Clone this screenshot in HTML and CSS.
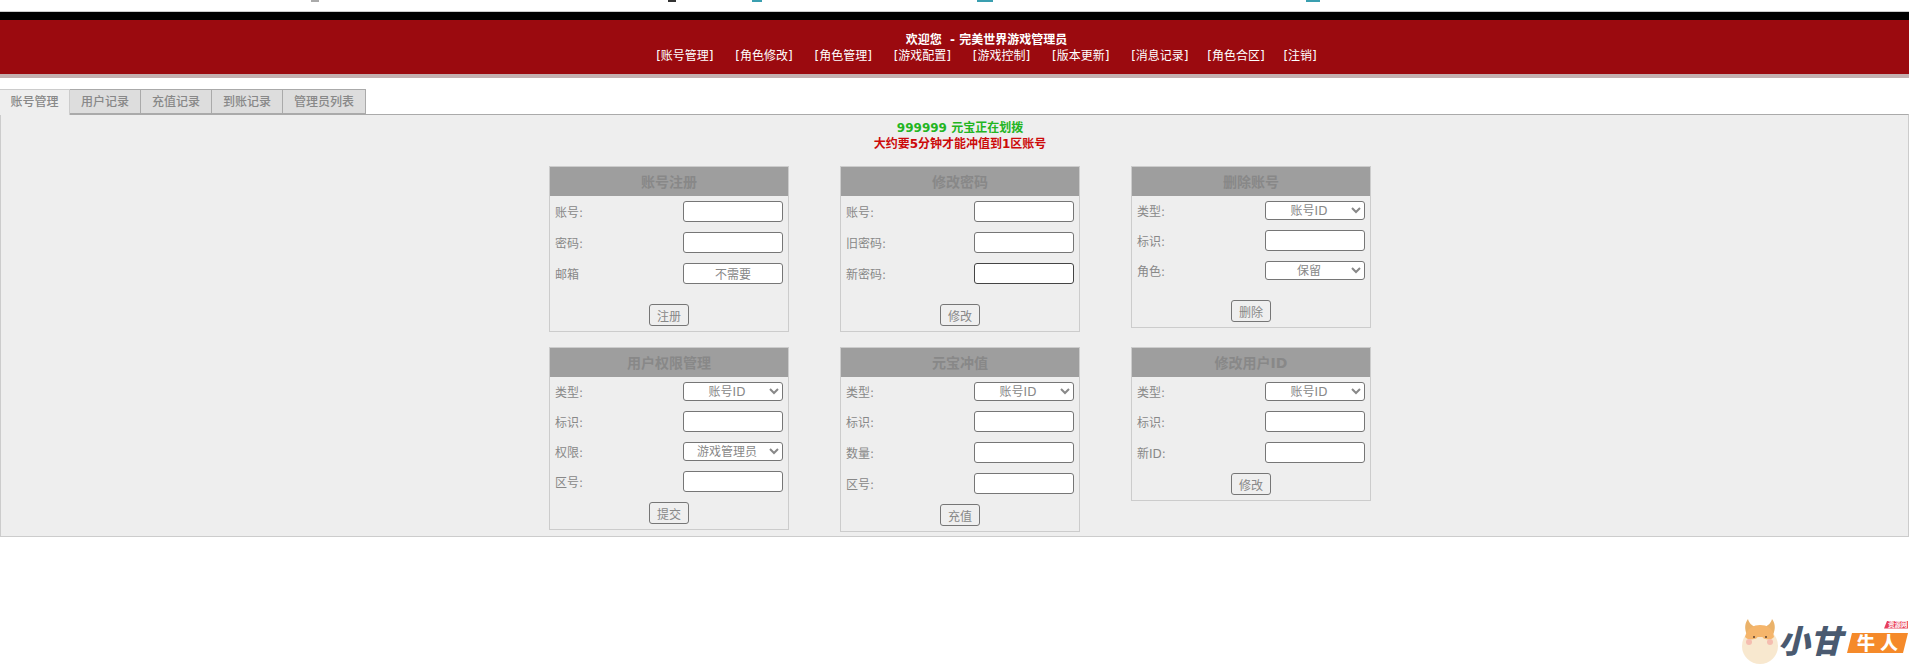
FILE: index.html
```html
<!DOCTYPE html>
<html lang="zh-CN">
<head>
<meta charset="utf-8">
<title>完美世界游戏管理员</title>
<link rel="stylesheet" href="styles.css">
</head>
<body>
<div class="topstrip">
  <i class="frag frag-a"></i><i class="frag frag-b"></i><i class="frag frag-c"></i><i class="frag frag-d"></i><i class="frag frag-e"></i>
</div>
<header class="masthead">
  <div class="welcome">欢迎您&nbsp; - 完美世界游戏管理员</div>
  <nav class="mainnav">
    <a>[账号管理]</a><a>[角色修改]</a><a>[角色管理]</a><a>[游戏配置]</a><a>[游戏控制]</a><a>[版本更新]</a><a>[消息记录]</a><a class="tight">[角色合区]</a><a class="tight">[注销]</a>
  </nav>
</header>
<div class="tabs">
  <a class="tab active">账号管理</a><a class="tab">用户记录</a><a class="tab">充值记录</a><a class="tab">到账记录</a><a class="tab">管理员列表</a>
</div>
<main class="content">
  <div class="msg green">999999 元宝正在划拨</div>
  <div class="msg red">大约要5分钟才能冲值到1区账号</div>
  <div class="panels">
    <section class="panel">
      <h3>账号注册</h3>
      <div class="body">
        <label class="row"><span>账号:</span><input type="text"></label>
        <label class="row"><span>密码:</span><input type="text"></label>
        <label class="row"><span>邮箱</span><input type="text" value="不需要"></label>
        <button class="far">注册</button>
      </div>
    </section>
    <section class="panel">
      <h3>修改密码</h3>
      <div class="body">
        <label class="row"><span>账号:</span><input type="text"></label>
        <label class="row"><span>旧密码:</span><input type="text"></label>
        <label class="row"><span>新密码:</span><input class="dark" type="text"></label>
        <button class="far">修改</button>
      </div>
    </section>
    <section class="panel">
      <h3>删除账号</h3>
      <div class="body">
        <label class="row"><span>类型:</span><select><option>账号ID</option></select></label>
        <label class="row"><span>标识:</span><input type="text"></label>
        <label class="row"><span>角色:</span><select><option>保留</option></select></label>
        <button class="far">删除</button>
      </div>
    </section>
    <section class="panel">
      <h3>用户权限管理</h3>
      <div class="body">
        <label class="row"><span>类型:</span><select><option>账号ID</option></select></label>
        <label class="row"><span>标识:</span><input type="text"></label>
        <label class="row"><span>权限:</span><select><option>游戏管理员</option></select></label>
        <label class="row"><span>区号:</span><input type="text"></label>
        <button>提交</button>
      </div>
    </section>
    <section class="panel">
      <h3>元宝冲值</h3>
      <div class="body">
        <label class="row"><span>类型:</span><select><option>账号ID</option></select></label>
        <label class="row"><span>标识:</span><input type="text"></label>
        <label class="row"><span>数量:</span><input type="text"></label>
        <label class="row"><span>区号:</span><input type="text"></label>
        <button>充值</button>
      </div>
    </section>
    <section class="panel">
      <h3>修改用户ID</h3>
      <div class="body">
        <label class="row"><span>类型:</span><select><option>账号ID</option></select></label>
        <label class="row"><span>标识:</span><input type="text"></label>
        <label class="row"><span>新ID:</span><input type="text"></label>
        <button>修改</button>
      </div>
    </section>
  </div>
</main>
<svg class="watermark" width="167" height="49" viewBox="0 -3 167 49" aria-label="小甘牛人">
  <path d="M6 17 C3 10 4 5 7 1 C8 5 11 8 15 9 L11 17Z" fill="#eab26a"/>
  <path d="M32 17 C35 10 34 5 31 1 C30 5 27 8 23 9 L27 17Z" fill="#eab26a"/>
  <circle cx="19" cy="28" r="18" fill="#f8e8cf"/>
  <path d="M4 19 C6 10 13 7 19 7 C26 7 32 10 33 19 C28 24 24 20 19 20 C14 20 9 24 4 19Z" fill="#f5b56b"/>
  <circle cx="8" cy="24" r="3" fill="#f5bdb0"/>
  <circle cx="29" cy="24" r="3" fill="#f5bdb0"/>
  <circle cx="13" cy="19" r="1" fill="#5a4030"/>
  <circle cx="25" cy="19" r="1" fill="#5a4030"/>
  <rect x="15.5" y="19" width="7" height="3" rx="1.5" fill="#f8e8cf"/>
  <text class="wm-main" x="37" y="35">小甘</text>
  <path d="M111 15 H167 L162 35 H106Z" fill="#f58a2a"/>
  <text class="wm-badge" x="116" y="32">牛人</text>
  <path d="M146 3 H167 V10.5 H143Z" fill="#e8405a"/>
  <text class="wm-tag" x="147" y="9">资源网</text>
</svg>
</body>
</html>
```
FILE: styles.css
```css
* { box-sizing: border-box; }
html, body { margin: 0; padding: 0; height: 664px; overflow: hidden; background: #fff; }
body { font-family: "DejaVu Sans", "Noto Sans CJK SC", sans-serif; font-size: 12px; color: #888; }

.topstrip { position: relative; height: 12px; border-bottom: 1px solid #ccc; }
.frag { position: absolute; top: 0; height: 2px; }
.frag-a { left: 311px; width: 8px; background: #aaa; }
.frag-b { left: 668px; width: 8px; background: #333; }
.frag-c { left: 752px; width: 10px; background: #3a9fb0; }
.frag-d { left: 977px; width: 16px; background: #3a9fb0; }
.frag-e { left: 1306px; width: 14px; background: #3a9fb0; }

.masthead {
  height: 66px;
  border-top: 8px solid #000;
  border-bottom: 4px solid #c4b0b0;
  background: #9b0a0f;
  color: #fff;
  padding: 12px 0 0 64px;
  display: flex;
  flex-direction: column;
  align-items: center;
  line-height: 16px;
}
.welcome { font-weight: bold; }
.mainnav { display: flex; gap: 21px; }
.mainnav a { padding: 0 0.4px; }
.mainnav .tight { margin-left: -3px; }

.tabs { display: flex; margin-top: 11px; height: 25px; position: relative; z-index: 1; }
.tab {
  width: 71px;
  height: 25px;
  line-height: 25px;
  text-align: center;
  background: #ddd;
  border: 1px solid #aaa;
  border-left-width: 0;
  color: #888;
  font-weight: 500;
}
.tab:last-child { width: 83px; }
.tab.active { width: 70px; height: 26px; background: #eee; border-color: #ccc; border-bottom: 0; }

.content {
  height: 423px;
  background: #eee;
  border: 1px solid #ccc;
  border-top-color: #aaa;
  padding: 5px 0 0 11px;
}
.msg { text-align: center; font-weight: bold; line-height: 16px; }
.green { color: #22b522; }
.red { color: #cc0a0a; }

.panels {
  display: grid;
  grid-template-columns: repeat(3, 240px);
  column-gap: 51px;
  row-gap: 15px;
  justify-content: center;
  align-items: start;
  margin-top: 14px;
}
.panel { border: 1px solid #ccc; }
.panel h3 {
  margin: 0;
  height: 29px;
  line-height: 30px;
  background: #9e9e9e;
  color: #888;
  font-size: 14px;
  text-align: center;
}
.body { padding: 5px; display: flex; flex-direction: column; gap: 10px; }
.row { display: flex; justify-content: space-between; align-items: center; }
input, select {
  width: 100px;
  font-family: inherit;
  font-size: 12px;
  color: #888;
  text-align: center;
  text-align-last: center;
  background-color: #fff;
  border: 1px solid #767676;
  border-radius: 3px;
}
input { height: 21px; padding: 0 2px; }
input.dark { border-color: #444; }
select { height: 19px; padding: 0; }
button {
  align-self: center;
  width: 40px;
  height: 22px;
  padding: 0;
  font-family: inherit;
  font-size: 12px;
  color: #888;
  background: #efefef;
  border: 1px solid #767676;
  border-radius: 3px;
}
button.far { margin-top: 10px; }

.watermark { position: absolute; left: 1741px; top: 615px; }
.wm-main { font-family: "Noto Sans CJK SC", sans-serif; font-size: 32px; font-weight: 900; font-style: italic; fill: #4a5a70; }
.wm-badge { font-family: "Noto Sans CJK SC", sans-serif; font-size: 18px; font-weight: 900; fill: #fff; letter-spacing: 5px; }
.wm-tag { font-family: "Noto Sans CJK SC", sans-serif; font-size: 6.5px; font-weight: 700; fill: #fff; }
```
